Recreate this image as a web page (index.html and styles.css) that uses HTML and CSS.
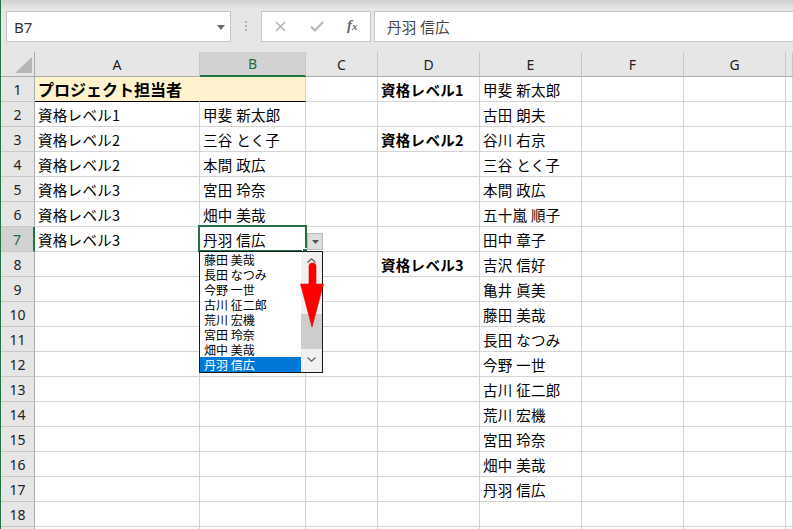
FILE: index.html
```html
<!DOCTYPE html>
<html lang="ja">
<head>
<meta charset="utf-8">
<title>Excel</title>
<link rel="stylesheet" href="styles.css">
</head>
<body>
<div class="app">
  <div class="fbar">
    <div class="namebox"><span>B7</span><svg class="nb-caret" width="8" height="5" viewBox="0 0 8 5"><polygon points="0,0 8,0 4,5" fill="#6a6a6a"/></svg></div>
    <div class="dots"><i></i><i></i><i></i></div>
    <div class="btns">
      <span class="btn"><svg width="11" height="11" viewBox="0 0 11 11"><path d="M1 1 L10 10 M10 1 L1 10" stroke="#b3b3b3" stroke-width="1.5" fill="none"/></svg></span>
      <span class="btn"><svg width="14" height="11" viewBox="0 0 14 11"><path d="M1 5.5 L5 9.5 L13 1" stroke="#b8b8b8" stroke-width="2.2" fill="none"/></svg></span>
      <span class="btn fx">f<sub>x</sub></span>
    </div>
    <div class="finput">丹羽 信広</div>
  </div>

  <div class="sheet">
    <div class="row hrow">
      <div class="h corner"><svg width="17" height="16" viewBox="0 0 17 16"><polygon points="17,0 17,16 0,16" fill="#b5b5b5"/></svg></div>
      <div class="h">A</div><div class="h act">B</div><div class="h">C</div><div class="h">D</div><div class="h">E</div><div class="h">F</div><div class="h">G</div><div class="h"></div>
    </div>
    <div class="row">
      <div class="rh">1</div><div class="c hl t">プロジェクト担当者</div><div class="c hl"></div><div class="c"></div><div class="c b">資格レベル1</div><div class="c">甲斐 新太郎</div><div class="c"></div><div class="c"></div><div class="c"></div>
    </div>
    <div class="row">
      <div class="rh">2</div><div class="c">資格レベル1</div><div class="c">甲斐 新太郎</div><div class="c"></div><div class="c"></div><div class="c">古田 朗夫</div><div class="c"></div><div class="c"></div><div class="c"></div>
    </div>
    <div class="row">
      <div class="rh">3</div><div class="c">資格レベル2</div><div class="c">三谷 とく子</div><div class="c"></div><div class="c b">資格レベル2</div><div class="c">谷川 右京</div><div class="c"></div><div class="c"></div><div class="c"></div>
    </div>
    <div class="row">
      <div class="rh">4</div><div class="c">資格レベル2</div><div class="c">本間 政広</div><div class="c"></div><div class="c"></div><div class="c">三谷 とく子</div><div class="c"></div><div class="c"></div><div class="c"></div>
    </div>
    <div class="row">
      <div class="rh">5</div><div class="c">資格レベル3</div><div class="c">宮田 玲奈</div><div class="c"></div><div class="c"></div><div class="c">本間 政広</div><div class="c"></div><div class="c"></div><div class="c"></div>
    </div>
    <div class="row">
      <div class="rh">6</div><div class="c">資格レベル3</div><div class="c">畑中 美哉</div><div class="c"></div><div class="c"></div><div class="c">五十嵐 順子</div><div class="c"></div><div class="c"></div><div class="c"></div>
    </div>
    <div class="row">
      <div class="rh act">7</div><div class="c">資格レベル3</div>
      <div class="c active">丹羽 信広
        <div class="sel"></div>
        <div class="handle"></div>
        <div class="ddbtn"><svg width="7" height="4" viewBox="0 0 7 4"><polygon points="0,0 7,0 3.5,4" fill="#555"/></svg></div>
        <div class="ddlist">
          <div class="items">
            <div class="it">藤田 美哉</div>
            <div class="it">長田 なつみ</div>
            <div class="it">今野 一世</div>
            <div class="it">古川 征二郎</div>
            <div class="it">荒川 宏機</div>
            <div class="it">宮田 玲奈</div>
            <div class="it">畑中 美哉</div>
            <div class="it on">丹羽 信広</div>
          </div>
          <div class="sbar">
            <svg class="chev" width="9" height="5" viewBox="0 0 9 5"><path d="M0.5 4.5 L4.5 0.8 L8.5 4.5" stroke="#606060" stroke-width="1.2" fill="none"/></svg>
            <div class="thumb"></div>
            <svg class="chev dn" width="9" height="5" viewBox="0 0 9 5"><path d="M0.5 0.5 L4.5 4.2 L8.5 0.5" stroke="#606060" stroke-width="1.2" fill="none"/></svg>
          </div>
        </div>
        <svg class="arrow" width="26" height="72" viewBox="0 0 26 72"><path d="M10 26 L10 8 Q10 5 13.5 5 Q17 5 17 8 L17 26 L24.5 26 L13 69 L1.5 26 Z" fill="#ff0000" stroke="#e00000" stroke-width="0.6"/></svg>
      </div>
      <div class="c"></div><div class="c"></div><div class="c">田中 章子</div><div class="c"></div><div class="c"></div><div class="c"></div>
    </div>
    <div class="row">
      <div class="rh">8</div><div class="c"></div><div class="c"></div><div class="c"></div><div class="c b">資格レベル3</div><div class="c">吉沢 信好</div><div class="c"></div><div class="c"></div><div class="c"></div>
    </div>
    <div class="row">
      <div class="rh">9</div><div class="c"></div><div class="c"></div><div class="c"></div><div class="c"></div><div class="c">亀井 眞美</div><div class="c"></div><div class="c"></div><div class="c"></div>
    </div>
    <div class="row">
      <div class="rh">10</div><div class="c"></div><div class="c"></div><div class="c"></div><div class="c"></div><div class="c">藤田 美哉</div><div class="c"></div><div class="c"></div><div class="c"></div>
    </div>
    <div class="row">
      <div class="rh">11</div><div class="c"></div><div class="c"></div><div class="c"></div><div class="c"></div><div class="c">長田 なつみ</div><div class="c"></div><div class="c"></div><div class="c"></div>
    </div>
    <div class="row">
      <div class="rh">12</div><div class="c"></div><div class="c"></div><div class="c"></div><div class="c"></div><div class="c">今野 一世</div><div class="c"></div><div class="c"></div><div class="c"></div>
    </div>
    <div class="row">
      <div class="rh">13</div><div class="c"></div><div class="c"></div><div class="c"></div><div class="c"></div><div class="c">古川 征二郎</div><div class="c"></div><div class="c"></div><div class="c"></div>
    </div>
    <div class="row">
      <div class="rh">14</div><div class="c"></div><div class="c"></div><div class="c"></div><div class="c"></div><div class="c">荒川 宏機</div><div class="c"></div><div class="c"></div><div class="c"></div>
    </div>
    <div class="row">
      <div class="rh">15</div><div class="c"></div><div class="c"></div><div class="c"></div><div class="c"></div><div class="c">宮田 玲奈</div><div class="c"></div><div class="c"></div><div class="c"></div>
    </div>
    <div class="row">
      <div class="rh">16</div><div class="c"></div><div class="c"></div><div class="c"></div><div class="c"></div><div class="c">畑中 美哉</div><div class="c"></div><div class="c"></div><div class="c"></div>
    </div>
    <div class="row">
      <div class="rh">17</div><div class="c"></div><div class="c"></div><div class="c"></div><div class="c"></div><div class="c">丹羽 信広</div><div class="c"></div><div class="c"></div><div class="c"></div>
    </div>
    <div class="row">
      <div class="rh">18</div><div class="c"></div><div class="c"></div><div class="c"></div><div class="c"></div><div class="c"></div><div class="c"></div><div class="c"></div><div class="c"></div>
    </div>
    <div class="row">
      <div class="rh"></div><div class="c"></div><div class="c"></div><div class="c"></div><div class="c"></div><div class="c"></div><div class="c"></div><div class="c"></div><div class="c"></div>
    </div>
  </div>
</div>
</body>
</html>
```
FILE: styles.css
```css
* { box-sizing: border-box; margin: 0; padding: 0; }
html, body { width: 793px; height: 529px; overflow: hidden; background: #fff; }
body { font-family: "Noto Sans CJK JP", "Noto Sans", sans-serif; color: #000; }

.app { border-left: 1px solid #217346; height: 529px; overflow: hidden; }

/* formula bar */
.fbar {
  height: 52px;
  background: linear-gradient(#d0d0d0, #e6e6e6 9px);
  display: flex;
  align-items: flex-start;
  padding-top: 11px;
  padding-left: 5px;
}
.namebox {
  width: 225px; height: 31px;
  background: #fff; border: 1px solid #c6c6c6;
  display: flex; align-items: center; justify-content: space-between;
  padding: 0 5px 0 7px;
  font-family: "Noto Sans", sans-serif; font-size: 15px; color: #333;
}
.nb-caret { margin-top: 1px; }
.dots { width: 2px; margin: 10px 14px 0 14px; display: flex; flex-direction: column; gap: 2px; }
.dots i { display: block; width: 2px; height: 2px; background: #b0b0b0; }
.btns {
  width: 110px; height: 31px;
  background: #fff; border: 1px solid #c6c6c6;
  display: flex; align-items: center; padding-left: 1px;
}
.btn { width: 36px; height: 29px; display: flex; align-items: center; justify-content: center; }
.fx {
  font-family: "Liberation Serif", serif; font-style: italic; font-weight: bold;
  font-size: 15px; color: #6b6b6b; padding-bottom: 2px;
}
.fx sub { font-size: 11px; vertical-align: -1px; }
.finput {
  flex: 1; height: 31px; margin-left: 3px;
  background: #fff; border: 1px solid #c6c6c6; border-right: none;
  display: flex; align-items: center; padding-left: 12px;
  font-size: 14.5px; color: #444; letter-spacing: 0.3px;
}

/* sheet */
.row {
  display: grid;
  grid-template-columns: 34px 165px 106px 72px 102px 102px 102px 102px 1fr;
  height: 25px;
}
.c {
  border-right: 1px solid #d4d4d4;
  border-bottom: 1px solid #d4d4d4;
  display: flex; align-items: center;
  padding-left: 3px;
  font-size: 14.5px; white-space: nowrap; letter-spacing: 0.3px;
}
.c.b { font-weight: bold; }
.c.hl { background: #fff2cc; border-bottom-color: #000; }
.c.t { font-weight: bold; font-size: 16px; letter-spacing: 0; border-right-color: #fff2cc; }

.h {
  background: #e6e6e6;
  border-right: 1px solid #c8c8c8;
  border-bottom: 1px solid #ababab;
  display: flex; align-items: center; justify-content: center;
  font-family: "Noto Sans", sans-serif; font-size: 14px; color: #222;
}
.h.corner { justify-content: flex-end; align-items: flex-end; padding: 0 2px 3px 0; border-right-color: #ababab; }
.h.act { background: #d2d2d2; border-bottom: 2px solid #217346; color: #1e6b41; }

.rh {
  background: #e6e6e6;
  border-right: 1px solid #ababab;
  border-bottom: 1px solid #c8c8c8;
  display: flex; align-items: center; justify-content: center;
  font-family: "Noto Sans", sans-serif; font-size: 14px; color: #222;
}
.rh.act { background: #d2d2d2; border-right: 2px solid #217346; color: #1e6b41; }

/* active cell + data validation dropdown */
.active { position: relative; }
.sel {
  position: absolute; left: -2px; top: -2px; right: -2px; bottom: -1px;
  border: 2px solid #217346;
}
.handle {
  position: absolute; right: -3px; bottom: -3px; width: 6px; height: 6px;
  background: #217346; border: 1px solid #fff;
}
.ddbtn {
  position: absolute; left: 107px; top: 6px; width: 16px; height: 17px;
  background: #dedede; border: 1px solid #b9b9b9;
  display: flex; align-items: center; justify-content: center;
}
.ddlist {
  position: absolute; left: -1px; top: 24px; width: 124px; height: 122px;
  background: #fff; border: 1px solid #1a1a1a;
  display: flex; letter-spacing: 0;
}
.items { width: 101px; }
.it { height: 15px; line-height: 15px; font-size: 12px; padding-left: 4px; white-space: nowrap; overflow: hidden; }
.it.on { background: #0078d7; color: #fff; }
.sbar { width: 21px; background: #f0f0f0; display: flex; flex-direction: column; align-items: center; }
.chev { margin-top: 6px; }
.thumb { width: 21px; height: 35px; background: #cdcdcd; margin-top: 51px; }
.chev.dn { margin-top: 8px; }
.arrow { position: absolute; left: 99px; top: 31px; }
```
